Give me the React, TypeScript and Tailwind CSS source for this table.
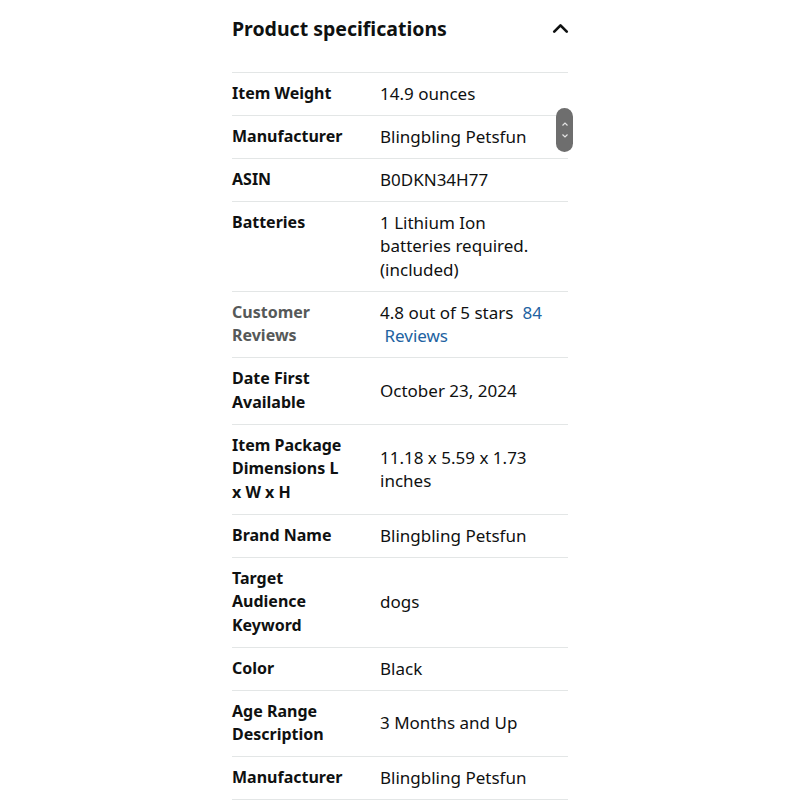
import { ChevronUp } from "lucide-react"

const specs: { label: string; value: string; muted?: boolean }[] = [
  { label: "Item Weight", value: "14.9 ounces" },
  { label: "Manufacturer", value: "Blingbling Petsfun" },
  { label: "ASIN", value: "B0DKN34H77" },
  { label: "Batteries", value: "1 Lithium Ion batteries required. (included)" },
  { label: "Customer Reviews", value: "", muted: true },
  { label: "Date First Available", value: "October 23, 2024" },
  { label: "Item Package Dimensions L x W x H", value: "11.18 x 5.59 x 1.73 inches" },
  { label: "Brand Name", value: "Blingbling Petsfun" },
  { label: "Target Audience Keyword", value: "dogs" },
  { label: "Color", value: "Black" },
  { label: "Age Range Description", value: "3 Months and Up" },
  { label: "Manufacturer", value: "Blingbling Petsfun" },
]

export default function App() {
  return (
    <div className="min-h-[800px] bg-white font-['Noto_Sans',sans-serif] text-[#0f1111]">
      <div className="relative mx-auto w-[336px]">
        <div className="flex h-[72px] items-start justify-between pt-[15px]">
          <h2 className="text-[19.5px] font-bold leading-[28px]">Product specifications</h2>
          <ChevronUp className="mr-[-5px] mt-[1px] h-[25px] w-[25px]" strokeWidth={2.6} />
        </div>

        <div className="border-t border-[#e3e6e6]">
          {specs.map((s, i) => (
            <div key={i} className="flex items-start border-b border-[#e3e6e6] py-[9.15px] leading-[23.6px]">
              <div className={`w-[148px] shrink-0 pr-[30px] text-[16px] font-bold ${s.muted ? "text-[#565959]" : ""}`}>
                {s.label}
              </div>
              <div className="w-[172px] self-center text-[17px]">
                {s.muted ? (
                  <>
                    4.8 out of 5 stars
                    <span className="ml-[9px] text-[#2162a1]">{"84 \u00a0Reviews"}</span>
                  </>
                ) : (
                  s.value
                )}
              </div>
            </div>
          ))}
        </div>

        {/* scroll thumb overlay */}
        <div className="absolute left-[324px] top-[108px] flex h-[44px] w-[17px] flex-col items-center justify-center gap-[6px] rounded-full bg-[#6e6e6e]">
          <svg width="8" height="6" viewBox="0 0 8 6" fill="none" stroke="#e5e5e5" strokeWidth="1.2">
            <path d="M1.5 4.5 4 2l2.5 2.5" />
          </svg>
          <svg width="8" height="6" viewBox="0 0 8 6" fill="none" stroke="#e5e5e5" strokeWidth="1.2">
            <path d="M1.5 1.5 4 4l2.5-2.5" />
          </svg>
        </div>
      </div>
    </div>
  )
}
